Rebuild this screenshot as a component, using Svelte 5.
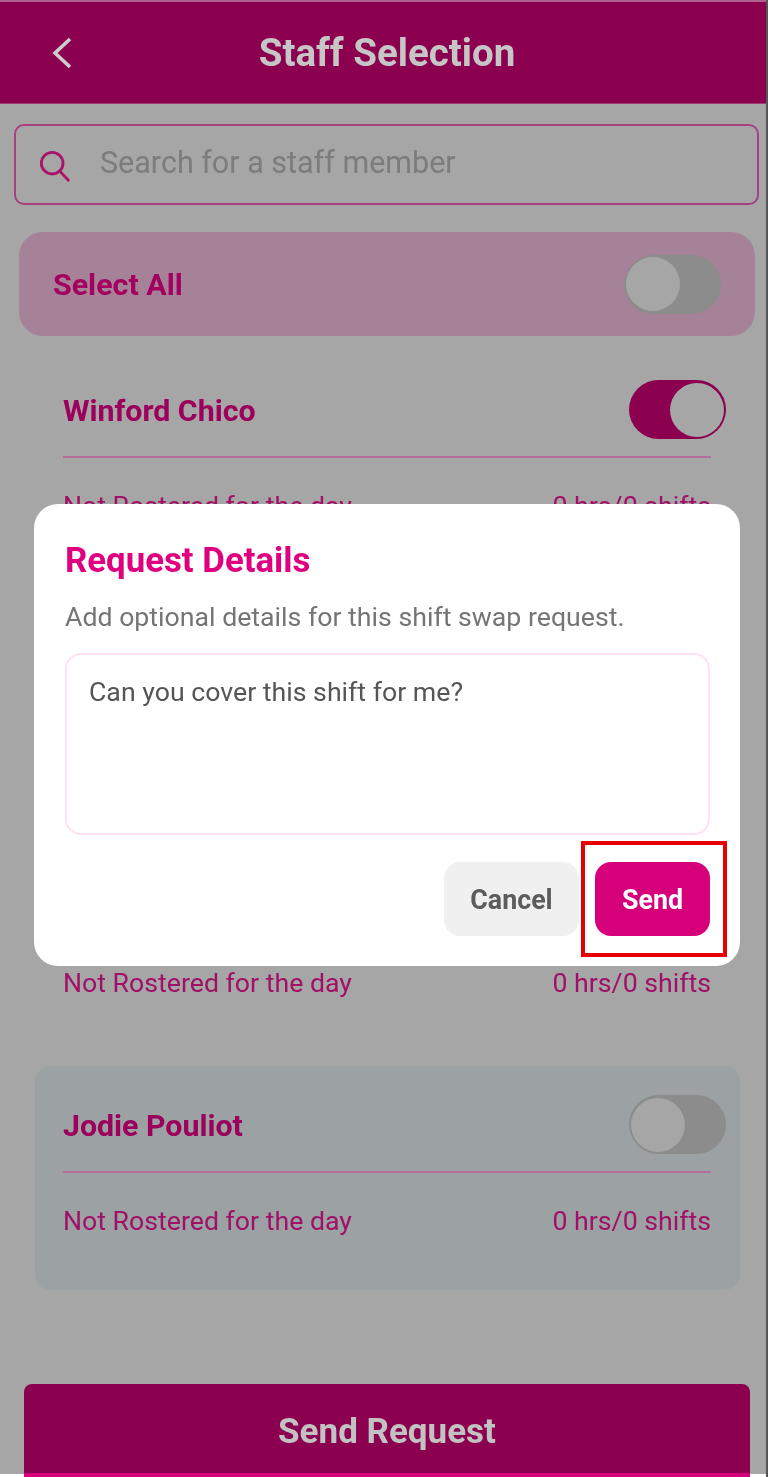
<script>
  const staff = [
    { name: "Winford Chico", on: true, tint: false },
    { name: "", on: false, tint: false },
    { name: "", on: false, tint: false },
    { name: "Jodie Pouliot", on: false, tint: true }
  ];
</script>

<div class="page">
  <div class="screen">
    <header>
      <svg class="back" width="24" height="34" viewBox="0 0 24 34">
        <path d="M20 3 L5 17 L20 31" />
      </svg>
      <h1>Staff Selection</h1>
    </header>

    <label class="search">
      <svg width="32" height="32" viewBox="0 0 34 34">
        <circle cx="14" cy="14" r="11.5" />
        <path d="M22.5 23 L32 33" />
      </svg>
      <input type="text" placeholder="Search for a staff member" />
    </label>

    <div class="select-all">
      <span>Select All</span>
      <div class="toggle"><i></i></div>
    </div>

    {#each staff as person}
      <section class="card" class:tint={person.tint}>
        <div class="head">
          <span class="name">{person.name}</span>
          <div class="toggle" class:on={person.on}><i></i></div>
        </div>
        <hr />
        <div class="details">
          <span>Not Rostered for the day</span>
          <span>0 hrs/0 shifts</span>
        </div>
      </section>
    {/each}

    <button class="send-request">Send Request</button>
  </div>

  <div class="modal">
    <h2>Request Details</h2>
    <p>Add optional details for this shift swap request.</p>
    <textarea>Can you cover this shift for me?</textarea>
    <div class="actions">
      <button class="cancel">Cancel</button>
      <button class="send">Send</button>
    </div>
  </div>

  <div class="highlight"></div>
</div>

<style>
  :global(body) {
    margin: 0;
    background: #fff;
  }

  .page {
    position: relative;
    width: 768px;
    height: 1477px;
    overflow: hidden;
    font-family: Roboto, "Liberation Sans", sans-serif;
  }

  .screen {
    display: flex;
    flex-direction: column;
    width: 768px;
    height: 1477px;
    border-right: 2px solid #555;
    box-sizing: border-box;
    background: linear-gradient(#a6a6a6 1474px, #fff 1474px);
    filter: blur(0.6px);
  }

  header {
    display: flex;
    align-items: center;
    justify-content: center;
    position: relative;
    height: 104px;
    box-sizing: border-box;
    border-top: 2px solid #b0608f;
    border-bottom: 1px solid #a03a75;
    background: #8b004f;
    flex-shrink: 0;
  }

  .back {
    position: absolute;
    left: 50px;
    top: 34px;
  }

  .back path {
    fill: none;
    stroke: #cdcdcd;
    stroke-width: 3.6;
  }

  h1 {
    margin: 0 0 0 8px;
    font-size: 38.5px;
    font-weight: 700;
    color: #c6c6c6;
  }

  .search {
    display: flex;
    align-items: center;
    gap: 29px;
    height: 81px;
    margin: 20px 7px 0 14px;
    padding-left: 23px;
    box-sizing: border-box;
    border: 2px solid #a84080;
    border-radius: 10px;
    flex-shrink: 0;
  }

  .search svg {
    flex-shrink: 0;
    margin-top: 2px;
  }

  .search circle,
  .search path {
    fill: none;
    stroke: #a8146a;
    stroke-width: 3;
  }

  .search input {
    flex: 1;
    min-width: 0;
    margin-bottom: 4px;
    padding: 0;
    border: 0;
    outline: 0;
    background: none;
    font: 400 30.5px Roboto, sans-serif;
  }

  .search input::placeholder {
    color: #7c7c7c;
    opacity: 1;
  }

  .select-all {
    display: flex;
    align-items: center;
    justify-content: space-between;
    height: 104px;
    margin: 27px 11px 0 19px;
    padding: 0 34px;
    box-sizing: border-box;
    border-radius: 24px;
    background: #a68299;
    flex-shrink: 0;
  }

  .select-all span {
    font-size: 30.4px;
    font-weight: 700;
    color: #a4005f;
  }

  .toggle {
    display: flex;
    align-items: center;
    width: 97px;
    height: 59px;
    padding: 0 2px;
    box-sizing: border-box;
    border-radius: 30px;
    background: #8c8c8c;
    flex-shrink: 0;
  }

  .toggle i {
    display: block;
    width: 54px;
    height: 54px;
    border-radius: 50%;
    background: #a6a6a6;
  }

  .toggle.on {
    justify-content: flex-end;
    background: #8b004f;
  }

  .card {
    height: 224px;
    margin: 15px 26px 0 35px;
    box-sizing: border-box;
    border-radius: 16px;
    flex-shrink: 0;
  }

  .card + .card {
    margin-top: 14.4px;
  }

  .card.tint {
    background: #9ca1a4;
  }

  .head {
    display: flex;
    align-items: center;
    justify-content: space-between;
    height: 105px;
    padding: 12px 14px 0 28px;
    box-sizing: border-box;
  }

  .name {
    margin-top: 2px;
    font-size: 30.3px;
    font-weight: 700;
    color: #9c005c;
  }

  hr {
    height: 2px;
    margin: 0 29px 0 28px;
    border: 0;
    background: #b86e9b;
  }

  .details {
    display: flex;
    justify-content: space-between;
    padding: 32px 29px 0 28px;
    font-size: 26.7px;
    color: #a01066;
  }

  .send-request {
    margin: auto 16px 0 24px;
    height: 93px;
    flex-shrink: 0;
    box-sizing: border-box;
    padding: 6px 0 0;
    border: 0;
    border-bottom: 4px solid #d6007a;
    border-radius: 8px 8px 0 0;
    background: #8b004f;
    font: 700 35px Roboto, sans-serif;
    color: #c2c2c2;
  }

  .modal {
    position: absolute;
    left: 34px;
    top: 504px;
    width: 706px;
    height: 462px;
    padding: 31px 30px 0 31px;
    box-sizing: border-box;
    border-radius: 24px;
    background: #fff;
    filter: blur(0.5px);
  }

  h2 {
    margin: 0;
    font-size: 34.8px;
    line-height: 50px;
    font-weight: 700;
    color: #e0007f;
  }

  .modal p {
    margin: 12px 0 0;
    font-size: 26.7px;
    line-height: 40px;
    color: #757575;
  }

  textarea {
    display: block;
    width: 100%;
    height: 182px;
    margin-top: 16px;
    padding: 17px 22px;
    box-sizing: border-box;
    border: 2px solid #ffdff3;
    border-radius: 16px;
    outline: 0;
    resize: none;
    overflow: hidden;
    font: 400 26.7px/40px Roboto, sans-serif;
    color: #555;
  }

  .actions {
    display: flex;
    justify-content: flex-end;
    gap: 16px;
    margin-top: 27px;
  }

  .actions button {
    height: 74px;
    padding: 2px 0 0;
    border: 0;
    border-radius: 16px;
    font: 700 26.8px Roboto, sans-serif;
  }

  .cancel {
    width: 135px;
    background: #f0f0f0;
    color: #5c5c5c;
  }

  .send {
    width: 115px;
    background: #d6007a;
    color: #fff;
  }

  .highlight {
    position: absolute;
    left: 581px;
    top: 841px;
    width: 146px;
    height: 116px;
    box-sizing: border-box;
    border: 4.5px solid #e60000;
  }
</style>
